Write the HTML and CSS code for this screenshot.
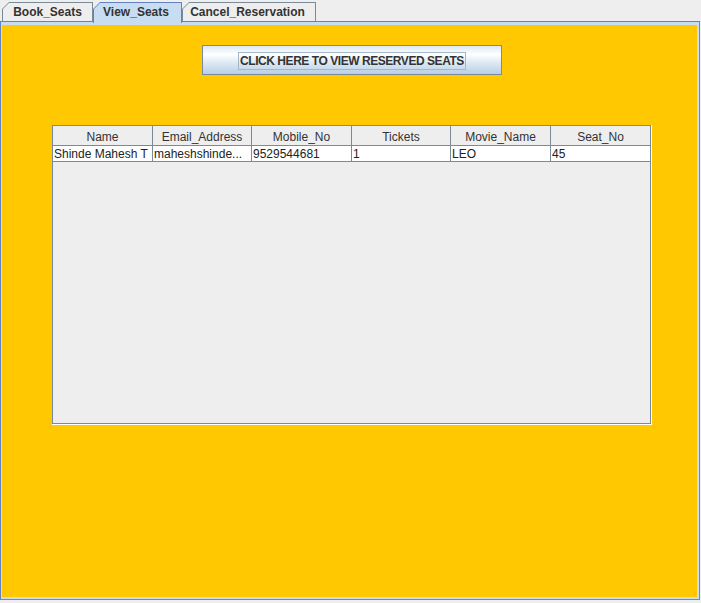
FILE: index.html
```html
<!DOCTYPE html>
<html>
<head>
<meta charset="utf-8">
<link rel="stylesheet" href="styles.css">
</head>
<body>
<div class="tabs">
  <div class="tab tab-book"><div class="tab-label">Book_Seats</div></div>
  <div class="tab tab-view selected"><div class="tab-label">View_Seats</div></div>
  <div class="tab tab-cancel"><div class="tab-label">Cancel_Reservation</div></div>
</div>
<div class="panel">
  <div class="content">
    <div class="btn"><span class="btn-text">CLICK HERE TO VIEW RESERVED SEATS</span></div>
    <div class="scroll">
      <div class="scroll-inner">
        <div class="grid head">
          <div class="hcell">Name</div>
          <div class="hcell">Email_Address</div>
          <div class="hcell">Mobile_No</div>
          <div class="hcell">Tickets</div>
          <div class="hcell">Movie_Name</div>
          <div class="hcell">Seat_No</div>
        </div>
        <div class="grid row">
          <div class="cell">Shinde Mahesh T</div>
          <div class="cell">maheshshinde...</div>
          <div class="cell">9529544681</div>
          <div class="cell">1</div>
          <div class="cell">LEO</div>
          <div class="cell">45</div>
        </div>
        <div class="viewport"></div>
      </div>
    </div>
  </div>
</div>
</body>
</html>
```
FILE: styles.css
```css
html, body {
  margin: 0;
  padding: 0;
  background: #eeeeee;
  font-family: "Liberation Sans", Arial, sans-serif;
  font-size: 12px;
  color: #333333;
}

.tabs {
  display: flex;
  align-items: flex-start;
  padding: 2px 0 0 2px;
  height: 19px;
}

.tab {
  box-sizing: border-box;
  height: 19px;
  padding: 1px 1px 0 1px;
  display: flex;
  background: #7a8a99;
  clip-path: polygon(0 7px, 7px 0, 100% 0, 100% 100%, 0 100%);
}

.tab-label {
  flex: 1;
  display: flex;
  align-items: center;
  justify-content: center;
  background: #eeeeee;
  font-weight: bold;
  color: #333333;
  clip-path: polygon(0 6px, 6px 0, 100% 0, 100% 100%, 0 100%);
  padding-bottom: 1px;
}

.tab-book { width: 91px; }
.tab-view { width: 89px; }
.tab-cancel { width: 134px; }
.tab-cancel .tab-label { padding-right: 3px; }

.tab.selected {
  position: relative;
  z-index: 1;
  height: 21px;
  margin-bottom: -2px;
  background: #6382bf;
}

.tab.selected .tab-label {
  background: #c8ddf2;
  padding-bottom: 3px;
  padding-right: 3px;
}

.panel {
  box-sizing: border-box;
  width: 700px;
  height: 579px;
  border: 1px solid #7a8a99;
  border-top-color: #6382bf;
  border-left-color: #6382bf;
  background: #c8ddf2;
  padding: 3px 2px 2px 1px;
  display: flex;
}

.content {
  flex: 1;
  background: #ffc800;
  padding: 20px 0 0 50px;
  display: flex;
  flex-direction: column;
  align-items: flex-start;
}

.btn {
  box-sizing: border-box;
  width: 300px;
  height: 30px;
  margin-left: 150px;
  border: 1px solid #7a8a99;
  background: linear-gradient(to bottom, #dde8f3 0%, #ffffff 30%, #dde8f3 60%, #b8cfe5 100%);
  display: flex;
  align-items: center;
  justify-content: center;
}

.btn-text {
  font-weight: bold;
  color: #333333;
  border: 1px solid #a3b8cc;
  line-height: 16px;
  padding: 0 1px;
  margin-top: 1px;
  letter-spacing: -0.45px;
}

.scroll {
  margin-top: 50px;
  width: 600px;
  height: 300px;
  box-sizing: border-box;
  border-right: 1px solid #ffffff;
  border-bottom: 1px solid #ffffff;
  display: flex;
}

.scroll-inner {
  flex: 1;
  border: 1px solid #7a8a99;
  background: #eeeeee;
  display: flex;
  flex-direction: column;
}

.grid {
  display: grid;
  grid-template-columns: 100px 99px 100px 99px 100px 99px;
}

.head {
  background: #eeeeee;
}

.hcell {
  box-sizing: border-box;
  height: 20px;
  padding-top: 2px;
  border-right: 1px solid #7a8a99;
  border-bottom: 1px solid #7a8a99;
  display: flex;
  align-items: center;
  justify-content: center;
  color: #333333;
  white-space: nowrap;
  overflow: hidden;
}

.hcell:last-child { border-right: none; }

.row {
  background: #ffffff;
}

.cell {
  box-sizing: border-box;
  height: 16px;
  border-right: 1px solid #7a8a99;
  border-bottom: 1px solid #7a8a99;
  padding-left: 1px;
  line-height: 16px;
  color: #222222;
  white-space: nowrap;
  overflow: hidden;
}

.cell:last-child { border-right: none; }

.viewport {
  flex: 1;
  background: #eeeeee;
}
```
